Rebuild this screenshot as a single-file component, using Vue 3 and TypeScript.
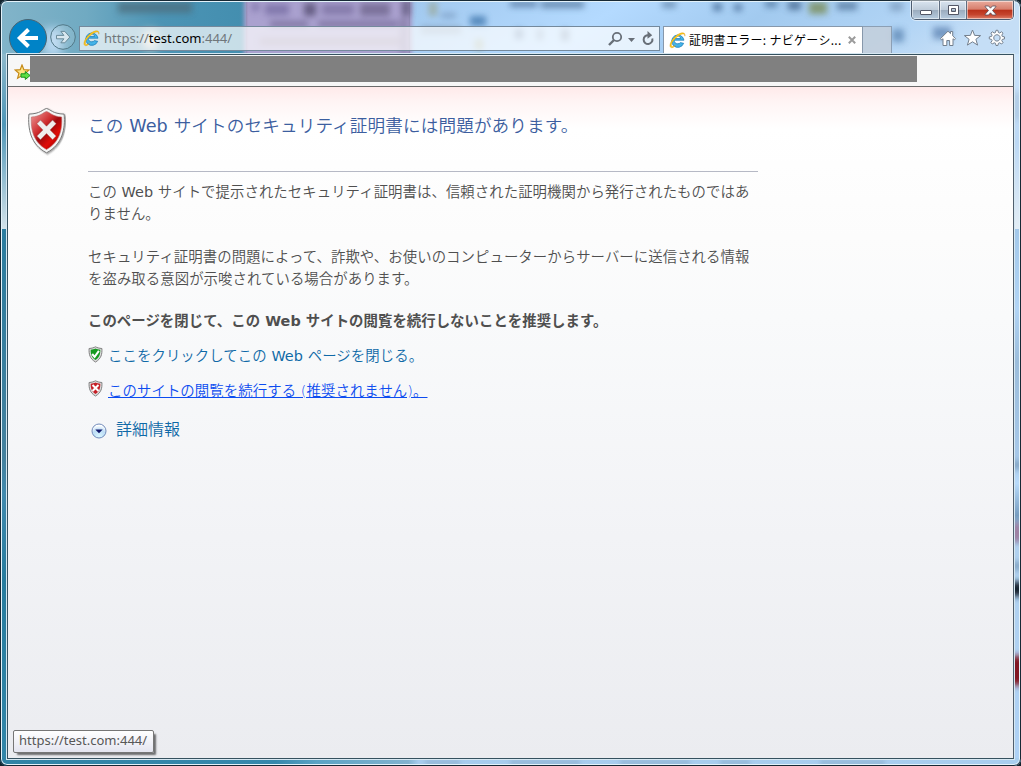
<script setup lang="ts">
interface Smudge {
  x: number
  y: number
  w: number
  h: number
  color: string
}

const smudges: Smudge[] = [
  { x: 118, y: 2, w: 74, h: 11, color: '#4d6f80' },
  { x: 252, y: 3, w: 7, h: 8, color: '#7970a5' },
  { x: 265, y: 4, w: 24, h: 11, color: '#7970a5' },
  { x: 270, y: 21, w: 38, h: 6, color: '#756b97' },
  { x: 318, y: 21, w: 80, h: 6, color: '#756b97' },
  { x: 304, y: 3, w: 12, h: 13, color: '#574f73' },
  { x: 322, y: 4, w: 32, h: 11, color: '#7e73a4' },
  { x: 360, y: 3, w: 30, h: 13, color: '#71688f' },
  { x: 402, y: 0, w: 8, h: 16, color: '#5c5578' },
  { x: 400, y: 18, w: 8, h: 36, color: '#847aa4' },
  { x: 260, y: 38, w: 140, h: 7, color: '#91819f' },
  { x: 429, y: 2, w: 8, h: 14, color: '#9aa99b' },
  { x: 441, y: 13, w: 15, h: 5, color: '#7b9cc1' },
  { x: 470, y: 16, w: 16, h: 10, color: '#4279af' },
  { x: 421, y: 26, w: 40, h: 8, color: '#86a1bb' },
  { x: 475, y: 39, w: 8, h: 11, color: '#9dab91' },
  { x: 510, y: 1, w: 27, h: 6, color: '#55779f' },
  { x: 541, y: 1, w: 43, h: 7, color: '#597ba0' },
  { x: 515, y: 29, w: 8, h: 10, color: '#5979a0' },
  { x: 537, y: 29, w: 6, h: 11, color: '#7895b4' },
  { x: 561, y: 29, w: 8, h: 12, color: '#6784a5' },
  { x: 662, y: 1, w: 14, h: 7, color: '#6689ae' },
  { x: 713, y: 3, w: 9, h: 8, color: '#476d98' },
  { x: 734, y: 4, w: 8, h: 7, color: '#476d98' },
  { x: 765, y: 1, w: 12, h: 6, color: '#496f98' },
  { x: 788, y: 1, w: 13, h: 9, color: '#46698f' },
  { x: 809, y: 2, w: 18, h: 12, color: '#7b8d58' },
  { x: 837, y: 2, w: 20, h: 8, color: '#54789d' },
  { x: 890, y: 2, w: 13, h: 9, color: '#7e9ec0' },
  { x: 892, y: 29, w: 12, h: 13, color: '#628bb7' },
  { x: 933, y: 27, w: 18, h: 12, color: '#6287b6' },
  { x: 1014, y: 92, w: 6, h: 28, color: '#a6bed7' },
]
</script>

<template>
  <div class="window">
    <svg class="glass" width="1021" height="766" viewBox="0 0 1021 766" aria-hidden="true">
      <defs>
        <linearGradient id="teal" x1="0" x2="1">
          <stop offset="0" stop-color="#82b4c9" /><stop offset=".35" stop-color="#70aac2" />
          <stop offset=".65" stop-color="#4c94b5" /><stop offset="1" stop-color="#438eaf" />
        </linearGradient>
        <linearGradient id="blue" x1="0" x2="1" y2=".15">
          <stop offset="0" stop-color="#a1c8ee" /><stop offset=".35" stop-color="#b4daff" />
          <stop offset=".6" stop-color="#a2caef" /><stop offset=".85" stop-color="#b1d4f5" />
          <stop offset="1" stop-color="#c5def6" />
        </linearGradient>
        <linearGradient id="leftTop" x2="0" y2="1">
          <stop offset="0" stop-color="#8eb9cb" /><stop offset=".4" stop-color="#4e96b7" /><stop offset="1" stop-color="#d4e3ea" />
        </linearGradient>
        <linearGradient id="leftBottom" x2="0" y2="1">
          <stop offset="0" stop-color="#2a7c9f" /><stop offset=".43" stop-color="#44819e" />
          <stop offset=".5" stop-color="#418aae" /><stop offset=".66" stop-color="#277c9e" /><stop offset="1" stop-color="#3286a9" />
        </linearGradient>
        <linearGradient id="rightTop" x2="0" y2="1">
          <stop offset="0" stop-color="#cde5fc" /><stop offset=".5" stop-color="#bcd8f4" /><stop offset="1" stop-color="#e3edf5" />
        </linearGradient>
        <linearGradient id="rightBottom" x2="0" y2="1">
          <stop offset="0" stop-color="#a3c8ea" /><stop offset=".15" stop-color="#b1d4f5" />
          <stop offset=".25" stop-color="#9cbddb" /><stop offset=".43" stop-color="#a7c8e9" />
          <stop offset=".48" stop-color="#b8dafa" /><stop offset=".54" stop-color="#779dc0" />
          <stop offset=".6" stop-color="#b1d1ef" /><stop offset="1" stop-color="#aed1f5" />
        </linearGradient>
        <linearGradient id="bottom">
          <stop offset="0" stop-color="#3083a5" /><stop offset=".27" stop-color="#3688ac" />
          <stop offset=".31" stop-color="#5ba3c4" /><stop offset=".4" stop-color="#82b3cf" />
          <stop offset=".41" stop-color="#a7cced" /><stop offset="1" stop-color="#a8ceef" />
        </linearGradient>
        <filter id="haze"><feGaussianBlur stdDeviation="3" /></filter>
        <filter id="glow" x="-1" y="-1" width="3" height="3"><feGaussianBlur stdDeviation="5" /></filter>
        <filter id="edge"><feGaussianBlur stdDeviation="2 3" /></filter>
      </defs>
      <rect width="246" height="60" fill="url(#teal)" />
      <rect x="410" width="611" height="60" fill="url(#blue)" />
      <path d="M244-20h168v100H244z" fill="#aaa1cf" filter="url(#edge)" />
      <path d="M44 28h18v28H44z" fill="#b8d7f0" filter="url(#glow)" />
      <path d="M144 31h13v18h-13z" fill="#eee0ce" filter="url(#glow)" />
      <rect y="54" width="9" height="176" fill="url(#leftTop)" />
      <rect y="229" width="9" height="530" fill="url(#leftBottom)" />
      <rect x="1013" y="54" width="8" height="176" fill="url(#rightTop)" />
      <rect x="1013" y="229" width="8" height="530" fill="url(#rightBottom)" />
      <g filter="url(#haze)" opacity=".8">
        <rect v-for="(s, i) in smudges" :key="i" :x="s.x" :y="s.y" :width="s.w" :height="s.h" :fill="s.color" />
      </g>
      <rect y="758" width="1021" height="8" fill="url(#bottom)" />
      <g filter="url(#edge)">
        <path d="M1004 523h30v19h-30z" fill="#9e82a4" />
        <path d="M1004 582h30v14h-30z" fill="#16242f" />
        <path d="M1004 656h30v29h-30z" fill="#811720" />
        <path d="M1004 461h30v8h-30zM1004 562h30v8h-30z" fill="#82a4c3" />
        <path d="M425 761h35v4h-35zM510 761h70v4h-70zM620 761h70v4h-70zM720 761h30v4h-30zM820 761h65v4h-65z" fill="#86a9c8" />
      </g>
    </svg>

    <header class="toolbar">
      <button class="back" aria-label="戻る">
        <svg width="38" height="38" viewBox="0 0 38 38">
          <circle cx="19" cy="19" r="18.500" fill="#0083c7" stroke="#4a6472" />
          <path d="M29 19H11M19.500 10.500 10.800 19l8.700 8.500" fill="none" stroke="#fff" stroke-width="4" />
        </svg>
      </button>
      <button class="forward" aria-label="進む">
        <svg width="26" height="26" viewBox="0 0 26 26">
          <circle cx="13" cy="13" r="12.300" fill="#fff" fill-opacity=".12" stroke="#527887" />
          <path d="M6.500 11.400h7.400l-3-4h3.900l5 5.700-5 5.700h-3.900l3-4H6.500z" fill="#d8e7ef" stroke="#628291" stroke-width=".9" />
        </svg>
      </button>

      <div class="address">
        <svg class="ie" width="17" height="17" viewBox="0 0 17 17">
          <path d="M14.700 11.300A6.200 6.200 0 1 1 15 8.200H5.200c0 2.100 1.300 3.600 3.600 3.600 1.200 0 2-.4 2.500-1.200zM5.300 6.500h6.200C11.300 4.800 10.200 4 8.600 4 6.800 4 5.600 4.900 5.300 6.500z" fill="#45b4e8" stroke="#1679b6" stroke-width=".7" />
          <path d="M2 15.600C-1.200 14 3.400 5.600 9.200 2.300 13.400-.1 16.800.5 15.800 4.200c.1-2.600-2-2.800-5.500-.8C4.700 6.700.9 12.900 2.800 14.200c.8.6 2.300 0 3.600-.8-1.500 1.500-3 2.800-4.400 2.200z" fill="#ffce18" stroke="#d69210" stroke-width=".4" />
        </svg>
        <span class="url">https://<b>test.com</b>:444/</span>
        <svg class="tools" width="50" height="18" viewBox="0 0 50 18" fill="none" stroke="#686f78">
          <circle cx="11" cy="7" r="4.200" stroke-width="1.800" />
          <path d="m8 10-5 5" stroke-width="2.400" />
          <path d="M22 8h7l-3.500 4z" fill="#686f78" stroke="none" />
          <path d="M42.500 5.200A4.400 4.400 0 1 0 46.300 8.500" stroke-width="2" />
          <path d="m41.500 1 4.700 4.200-4.700 3.500z" fill="#686f78" stroke="none" />
        </svg>
      </div>

      <div class="tab">
        <svg class="ie" width="17" height="17" viewBox="0 0 17 17">
          <path d="M14.700 11.300A6.200 6.200 0 1 1 15 8.200H5.200c0 2.100 1.300 3.600 3.600 3.600 1.200 0 2-.4 2.500-1.200zM5.300 6.500h6.200C11.300 4.800 10.200 4 8.600 4 6.800 4 5.600 4.900 5.300 6.500z" fill="#45b4e8" stroke="#1679b6" stroke-width=".7" />
          <path d="M2 15.600C-1.200 14 3.400 5.600 9.200 2.300 13.400-.1 16.800.5 15.800 4.200c.1-2.600-2-2.800-5.500-.8C4.700 6.700.9 12.900 2.800 14.200c.8.6 2.300 0 3.600-.8-1.500 1.500-3 2.800-4.400 2.200z" fill="#ffce18" stroke="#d69210" stroke-width=".4" />
        </svg>
        <span class="tab-title">証明書エラー: ナビゲーシ...</span>
        <svg class="tab-close" width="8" height="8" viewBox="0 0 8 8"><path d="m.8.8 6.400 6.400M7.200.8.8 7.200" stroke="#9b9b9b" stroke-width="2" /></svg>
      </div>
      <div class="new-tab"></div>

      <svg class="commands" width="68" height="20" viewBox="0 0 68 20" fill="#fff" stroke="#737f8d" stroke-width="1">
        <path d="M1.500 10.600 9 3.200l2.500 2.400V3.500h2.200v4.300l2.800 2.800-1.200 1.300-1.300-1.200v6.800h-3.400v-5H7.800v5H4v-6.800l-1.300 1.200z" />
        <path d="m33.500 2 2.100 5.400 6 .2-4.700 3.700 1.700 5.800-5.100-3.300-5.100 3.300 1.700-5.800-4.700-3.700 6-.2z" />
        <path fill-rule="evenodd" d="m57 2.300 1.900 0 .5 2.200 1.200.5 2-1.200 1.400 1.400-1.200 1.900.5 1.300 2.200.5v2l-2.200.5-.5 1.200 1.200 2-1.400 1.400-2-1.200-1.200.5-.5 2.200h-1.900l-.5-2.200-1.300-.5-1.900 1.200-1.400-1.400 1.200-2-.5-1.200-2.300-.5v-2l2.300-.5.5-1.300-1.200-1.900 1.400-1.400 1.900 1.200 1.300-.5zM57.900 6.700a3.200 3.200 0 1 0 .1 0z" />
      </svg>
    </header>

    <div class="caption">
      <span class="cap min"><svg width="14" height="7" viewBox="0 0 14 7"><rect x="1.500" y="1.500" width="11" height="4" rx=".5" fill="#fff" stroke="#535766" /></svg></span>
      <span class="cap max"><svg width="13" height="11" viewBox="0 0 13 11"><path fill-rule="evenodd" d="M1.500.5h10v9h-10zM4.500 3.500h4v3h-4z" fill="#fff" stroke="#535766" /></svg></span>
      <span class="cap close"><svg width="13" height="11" viewBox="0 0 13 11"><path d="M1.200 1h3.400l1.900 2.200L8.400 1h3.400v.8L8.500 5.500l3.300 3.700v.8H8.400L6.500 7.800 4.600 10H1.200v-.8l3.300-3.700-3.300-3.700z" fill="#fff" stroke="#554b59" stroke-width=".8" /></svg></span>
    </div>

    <div class="client">
      <div class="favorites">
        <svg width="17" height="17" viewBox="0 0 17 17">
          <path d="m8 1 1.900 4.700 5.100.4-3.900 3.200 1.300 5L8 11.600l-4.400 2.700 1.300-5L1.300 6.100l4.900-.4z" fill="#ffe481" stroke="#c58a19" stroke-width="1.200" />
          <path d="M7 9.800h4.300V7.500l4.800 4-4.800 4v-2.300H7z" fill="#5ee043" stroke="#189421" />
        </svg>
        <div class="mask"></div>
      </div>

      <main class="page">
        <svg class="shield" width="41" height="49" viewBox="0 0 42 49" preserveAspectRatio="none">
          <defs>
            <linearGradient id="red" x1=".1" y1=".1" x2=".8" y2=".9">
              <stop offset="0" stop-color="#e68080" /><stop offset=".38" stop-color="#ce2b2d" />
              <stop offset=".55" stop-color="#9e090d" /><stop offset=".8" stop-color="#df0c08" /><stop offset="1" stop-color="#b50000" />
            </linearGradient>
            <filter id="drop" x="-.2" y="-.2" width="1.400" height="1.400"><feDropShadow dx="1" dy="1" stdDeviation=".8" flood-opacity=".4" /></filter>
          </defs>
          <path d="M20 1.500c4.700 1.100 5.800 5.200 18 5.600 1.400 14.500-1.600 30.500-18 38.700C3.600 37.600.7 21.600 2 7.100 14.200 6.700 15.300 2.600 20 1.500z" fill="#f5f5f5" stroke="#757575" filter="url(#drop)" />
          <path d="M20 4.500c4.400 1.300 5.900 4.900 15.500 5.500.8 12.500-2 25-15.500 32.500C6.500 35 3.700 22.500 4.500 10 14.100 9.400 15.600 5.800 20 4.500z" fill="url(#red)" stroke="#b86767" stroke-width=".6" />
          <path d="m13.800 13 6.200 6.200 6.200-6.200 3.700 3.700-6.200 6.200 6.200 6.200-3.700 3.700-6.200-6.200-6.200 6.200-3.700-3.700 6.200-6.200-6.200-6.200z" fill="#f0eeee" stroke="#9a4c4c" stroke-width=".5" />
        </svg>

        <div class="message">
          <h1>この <span class="latin">Web</span> サイトのセキュリティ証明書には問題があります。</h1>
          <p class="first">この <span class="latin">Web</span> サイトで提示されたセキュリティ証明書は、信頼された証明機関から発行されたものではあ<br />りません。</p>
          <p class="second">セキュリティ証明書の問題によって、詐欺や、お使いのコンピューターからサーバーに送信される情報<br />を盗み取る意図が示唆されている場合があります。</p>
          <p class="strong">このページを閉じて、この Web サイトの閲覧を続行しないことを推奨します。</p>

          <div class="action">
            <svg class="ok" width="15" height="17" viewBox="0 0 15 17">
              <path d="M7.500.8c1.700.9 3.600 1.500 6.400 1.700.3 5.500-.6 10.200-6.400 13.500C1.700 12.700.8 8 1.100 2.500 3.900 2.300 5.800 1.700 7.500.8z" fill="#ddd" stroke="#808080" />
              <path d="M7.500 2.500c1.500.7 2.800 1.100 4.800 1.300.1 4.300-.8 7.800-4.800 10.300C3.500 11.600 2.600 8.100 2.700 3.800c2-.2 3.300-.6 4.800-1.300z" fill="#159a20" />
              <path d="m4.200 8 2.400 2.800 4.300-6" fill="none" stroke="#fff" stroke-width="2" />
            </svg>
            <a class="safe">ここをクリックしてこの <span class="latin">Web</span> ページを閉じる。</a>
          </div>
          <div class="action">
            <svg width="15" height="17" viewBox="0 0 15 17">
              <path d="M7.500.8c1.700.9 3.600 1.500 6.400 1.700.3 5.500-.6 10.200-6.400 13.500C1.700 12.700.8 8 1.100 2.500 3.900 2.300 5.800 1.700 7.500.8z" fill="#ddd" stroke="#808080" />
              <path d="M7.500 2.500c1.500.7 2.800 1.100 4.800 1.300.1 4.300-.8 7.800-4.800 10.300C3.500 11.600 2.600 8.100 2.700 3.800c2-.2 3.300-.6 4.800-1.300z" fill="#c51f26" />
              <path d="m4.500 5 6 6m0-6-6 6" stroke="#fff" stroke-width="2" />
            </svg>
            <a class="risky">このサイトの閲覧を続行する (推奨されません)。</a>
          </div>
          <div class="details">
            <svg width="16" height="16" viewBox="0 0 16 16">
              <defs><radialGradient id="orb" cx=".5" cy=".9" r=".8"><stop offset="0" stop-color="#d9f7ff" /><stop offset=".6" stop-color="#bcdcf5" /><stop offset="1" stop-color="#fff" /></radialGradient></defs>
              <circle cx="8" cy="8" r="7" fill="url(#orb)" stroke="#718bbb" />
              <path d="M4.300 6.500h7.400L8 10.200z" fill="#10176b" />
            </svg>
            <a>詳細情報</a>
          </div>
        </div>
        <div class="status">https://test.com:444/</div>
      </main>
    </div>
  </div>
</template>

<style>
body { margin: 0; background: #13242e; overflow: hidden; }
</style>

<style scoped>
.window {
  position: relative;
  box-sizing: border-box;
  width: 1021px;
  height: 766px;
  padding: 2px 6px 6px;
  overflow: hidden;
  display: flex;
  flex-direction: column;
  border-radius: 7px;
  font-family: "DejaVu Sans", "Noto Sans CJK JP", sans-serif;
}
.window::after {
  content: "";
  position: absolute;
  inset: 0;
  border: 1px solid #172935;
  border-radius: 7px;
  box-shadow: inset 0 0 0 1px #e3f2fa;
  pointer-events: none;
}
.glass { position: absolute; left: 0; top: 0; }
.toolbar {
  position: relative;
  display: flex;
  align-items: flex-start;
  height: 51px;
  flex: none;
  padding-left: 3px;
  overflow: hidden;
}
button { padding: 0; border: 0; background: none; display: block; }
button svg { display: block; }
.back { margin-top: 17px; }
.forward { margin: 22px 0 0 3px; }
.address {
  box-sizing: border-box;
  width: 581px;
  height: 25px;
  margin: 24px 0 0 3px;
  border: 1px solid #74899c;
  background: rgba(255, 255, 255, .7);
  display: flex;
  align-items: center;
  padding: 0 3px;
}
.ie { flex: none; }
.url {
  margin: -2px 0 0 4px;
  font: 13px/20px "Noto Sans", sans-serif;
  color: #70777b;
  white-space: nowrap;
}
.url b { font-weight: 400; color: #000; }
.tools { margin-left: auto; }
.tab {
  box-sizing: border-box;
  width: 200px;
  height: 27px;
  margin: 24px 0 0 3px;
  padding-left: 5px;
  background: #fff;
  border: 1px solid #8798ab;
  border-bottom: 0;
  display: flex;
  align-items: center;
}
.tab-title {
  width: 153px;
  margin: -1px 0 0 3px;
  font: 12px/20px "Noto Sans CJK JP", sans-serif;
  letter-spacing: .3px;
  color: #000;
  white-space: nowrap;
}
.tab-close { margin-left: 6px; }
.new-tab {
  box-sizing: border-box;
  width: 29px;
  height: 27px;
  margin-top: 24px;
  background: rgba(196, 207, 219, .85);
  border: 1px solid #8c9fb4;
  border-left: 0;
  border-bottom: 0;
}
.commands { margin: 26px 0 0 47px; }
.caption {
  position: absolute;
  top: 1px;
  left: 911px;
  z-index: 2;
  box-sizing: border-box;
  width: 103px;
  height: 19px;
  display: flex;
  border: 1px solid #4d5c70;
  border-top: 0;
  border-radius: 0 0 5px 5px;
  overflow: hidden;
  box-shadow: 0 0 0 1px rgba(255, 255, 255, .5);
}
.cap {
  box-sizing: border-box;
  width: 28px;
  display: flex;
  align-items: center;
  justify-content: center;
  border-right: 1px solid #5f6d80;
  background: linear-gradient(#d9e4ef 0, #bfccda 48%, #9aabbd 50%, #b6cbdf 100%);
  box-shadow: inset 0 0 0 1px rgba(255, 255, 255, .5);
}
.cap.max { width: 27px; }
.min svg { margin-top: 4px; }
.cap.close {
  width: 46px;
  border-right: 0;
  background: linear-gradient(#e9aa9c 0, #d77e6c 46%, #b9301a 50%, #c5442d 75%, #de806a 100%);
}
.client {
  position: relative;
  box-sizing: border-box;
  width: 1009px;
  height: 707px;
  flex: none;
  border: 1px solid #d7e8f2;
  display: flex;
  flex-direction: column;
}
.favorites {
  box-sizing: border-box;
  height: 33px;
  flex: none;
  display: flex;
  background: #f7f7f7;
  border: 1px solid #35515f;
  border-bottom-color: #6b6b6b;
}
.favorites svg { margin: 9px -1px 0 6px; flex: none; }
.mask { width: 887px; height: 26px; margin-top: 1px; background: #808080; }
.page {
  position: relative;
  box-sizing: border-box;
  flex: 1;
  border: 1px solid #35515f;
  border-top: 0;
  background: linear-gradient(#ffeaea 0, #fff5f5 16px, #fff 42px, #fcfcfc 150px, #f9fafb 230px, #f2f3f6 450px, #ebecf0 100%);
  display: flex;
  align-items: flex-start;
}
.favorites, .page { border-right-color: #505f6e; }
.shield { margin: 20px 0 0 19px; flex: none; }
.message { width: 690px; margin-left: 20px; color: #4f4f4f; font-weight: 350; }
.latin { font-weight: 400; }
.message p { margin: 0; font-size: 14.4px; line-height: 22px; letter-spacing: .06px; white-space: nowrap; }
h1 {
  box-sizing: border-box;
  width: 670px;
  height: 85px;
  margin: 0;
  padding-top: 26px;
  border-bottom: 1px solid #b6b9c5;
  color: #3c5e9f;
  font-size: 17.6px;
  font-weight: 350;
  line-height: 26px;
  letter-spacing: .13px;
  white-space: nowrap;
}
.message .first { margin-top: 9px; }
.message .second { margin-top: 21px; }
.message .strong { margin-top: 20px; font-weight: 700; letter-spacing: .04px; }
.action { display: flex; height: 22px; margin-top: 13px; }
.action svg { flex: none; }
.action .ok { margin-top: 1px; }
.action a { margin-left: 5px; font-size: 14.4px; line-height: 22px; letter-spacing: .08px; white-space: nowrap; }
.safe, .details a { color: #0f69a7; }
.risky { color: #0c4cf0; text-decoration: underline; }
.details { display: flex; align-items: center; margin: 16px 0 0 3px; height: 24px; }
.details svg { margin-top: 1px; }
.details a { margin-left: 9px; font-size: 16px; line-height: 24px; }
.status {
  position: absolute;
  left: 5px;
  bottom: 5px;
  box-sizing: border-box;
  width: 141px;
  height: 23px;
  padding-left: 5px;
  border: 1px solid #767676;
  border-radius: 2px;
  background: linear-gradient(#fff, #e4e5f0);
  box-shadow: 3px 3px 2px -1px rgba(0, 0, 0, .55);
  color: #575757;
  font: 13px/19px "Noto Sans", sans-serif;
  white-space: nowrap;
}
</style>
